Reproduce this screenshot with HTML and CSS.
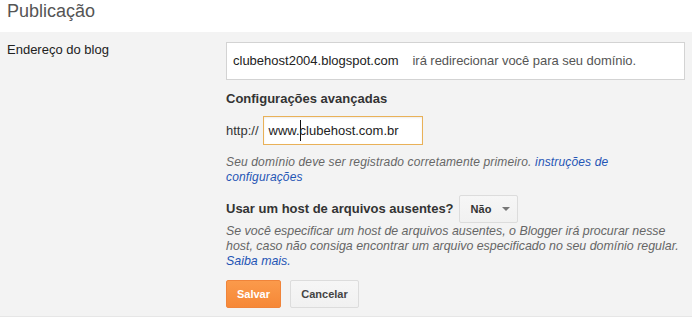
FILE: index.html
```html
<!DOCTYPE html>
<html lang="pt-BR">
<head>
  <meta charset="UTF-8" />
  <meta name="viewport" content="width=device-width, initial-scale=1.0"/>
  <title>Publicação</title>
  <link rel="stylesheet" href="styles.css">
</head>
<body>

  <h2 class="page-title">Publicação</h2>

  <div class="panel">
    <div class="label">Endereço do blog</div>

    <div class="field">
      <div class="addr-box">
        <span class="addr">clubehost2004.blogspot.com</span><span class="redirect">irá redirecionar você para seu domínio.</span>
      </div>

      <h3 class="sub">Configurações avançadas</h3>

      <div class="domain-row">
        <span class="proto">http://</span>
        <div class="domain-input">www.<span class="caret"></span>clubehost.com.br</div>
      </div>

      <p class="hint">Seu domínio deve ser registrado corretamente primeiro. <a href="#">instruções de configurações</a></p>

      <div class="missing-row">
        <span class="sub inline">Usar um host de arquivos ausentes?</span>
        <button class="btn select">Não <span class="arrow"></span></button>
      </div>

      <p class="hint big">Se você especificar um host de arquivos ausentes, o Blogger irá procurar nesse host, caso não consiga encontrar um arquivo especificado no seu domínio regular. <a href="#">Saiba mais.</a></p>

      <div class="actions">
        <button class="btn primary">Salvar</button>
        <button class="btn">Cancelar</button>
      </div>
    </div>
  </div>

</body>
</html>
```

FILE: styles.css
```css
body {
  margin: 0;
  padding: 0;
  font-family: "Liberation Sans", Arial, sans-serif;
  font-size: 13px;
  color: #222;
  background: #fff;
}

.page-title {
  margin: 0;
  padding: 0 7px;
  height: 32px;
  font-size: 18px;
  font-weight: normal;
  line-height: 22px;
  color: #555;
}

.panel {
  display: flex;
  background: #f3f3f3;
  padding: 10px 0 8px;
  border-bottom: 1px solid #e6e6e6;
}

.label {
  width: 219px;
  padding-left: 7px;
  line-height: 16px;
  color: #222;
}

.field {
  width: 459px;
}

.addr-box {
  background: #fff;
  border: 1px solid #d3d3d3;
  padding: 10px 6px;
  line-height: 16px;
  white-space: nowrap;
}

.addr {
  color: #222;
}

.redirect {
  margin-left: 14px;
  letter-spacing: -0.05px;
  color: #555;
}

.sub {
  margin: 11px 0 0;
  font-size: 13px;
  font-weight: bold;
  line-height: 16px;
  color: #333;
}

.sub.inline {
  margin: 0;
}

.domain-row {
  display: flex;
  align-items: center;
  gap: 4px;
  margin-top: 9px;
}

.proto {
  color: #333;
}

.domain-input {
  box-sizing: border-box;
  width: 160px;
  height: 29px;
  padding: 0 5px;
  line-height: 27px;
  background: #fff;
  border: 1px solid #e9b158;
  box-shadow: inset 0 1px 2px rgba(0, 0, 0, 0.08);
  color: #222;
}

.caret {
  display: inline-block;
  width: 1px;
  height: 21px;
  margin-right: -1px;
  background: #111;
  vertical-align: -6px;
}

.hint {
  margin: 10px 0 0;
  font-size: 12px;
  font-style: italic;
  letter-spacing: 0.15px;
  line-height: 15px;
  color: #666;
}

.hint.big {
  margin-top: 1px;
  font-size: 12.4px;
  letter-spacing: 0;
}

.hint a {
  color: #1f55b5;
  text-decoration: none;
}

.missing-row {
  display: flex;
  align-items: center;
  gap: 5px;
  margin-top: 10px;
}

.btn {
  box-sizing: border-box;
  height: 28px;
  padding: 0 10px;
  font-family: "Liberation Sans", Arial, sans-serif;
  font-size: 11px;
  font-weight: bold;
  color: #444;
  background: linear-gradient(#f6f6f6, #f1f1f1);
  border: 1px solid #dcdcdc;
  border-radius: 2px;
  cursor: pointer;
}

.select {
  display: flex;
  align-items: center;
  width: 59px;
  padding: 0 0 0 11px;
  white-space: nowrap;
  color: #333;
}

.arrow {
  margin-left: 11px;
  border-left: 4px solid transparent;
  border-right: 4px solid transparent;
  border-top: 4px solid #777;
}

.actions {
  display: flex;
  gap: 9px;
  margin-top: 11px;
}

.primary {
  width: 55px;
  padding: 0;
  color: #fff;
  background: linear-gradient(#fb9a4b, #f68837);
  border-color: #f0843a;
}

.actions .btn:not(.primary) {
  width: 69px;
  padding: 0;
}
```
